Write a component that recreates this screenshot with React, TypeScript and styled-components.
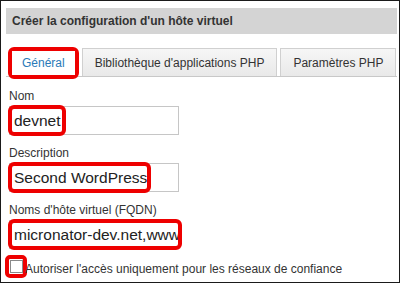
import styled, { createGlobalStyle } from 'styled-components';

const GlobalStyle = createGlobalStyle`
  html, body {
    margin: 0;
    padding: 0;
    background: #fff;
  }
  * {
    box-sizing: border-box;
  }
`;

const Frame = styled.div`
  width: 400px;
  height: 283px;
  overflow: hidden;
  border: 1px solid #1a1a1a;
  padding: 7px 2px 0 5px;
  background: #fff;
  font-family: "Liberation Sans", Arial, sans-serif;
  color: #333;
`;

const Header = styled.div`
  display: flex;
  align-items: center;
  height: 26px;
  padding: 0 6px;
  background: #d4d4d4;
  font-size: 12px;
  font-weight: bold;
  color: #333;
`;

const TabBar = styled.div`
  display: flex;
  align-items: flex-end;
  gap: 3px;
  margin-top: 13px;
  padding: 0 6px 0 2px;
  border-bottom: 1px solid #c8c8c8;
`;

const Tab = styled.div<{ active?: boolean }>`
  display: flex;
  align-items: center;
  flex-shrink: 0;
  white-space: nowrap;
  height: 28px;
  padding: 0 ${p => (p.active ? '10px' : '12px')};
  border: 1px solid #d0d0d0;
  border-bottom: none;
  background: ${p => (p.active ? '#fff' : 'linear-gradient(#f6f6f6, #e9e9e9)')};
  color: ${p => (p.active ? '#2a7ab8' : '#333')};
  font-size: 12px;
`;

const TabRing = styled.div`
  flex-shrink: 0;
  border: 4px solid #ee0000;
  border-radius: 6px;
  margin-bottom: -3px;
  position: relative;
  z-index: 1;
  background: #fff;
  & > div {
    border: none;
    height: 24px;
    padding: 0 10px;
  }
`;

const Form = styled.div`
  display: flex;
  flex-direction: column;
  padding: 12px 0 0 3px;
`;

const Field = styled.div`
  display: flex;
  flex-direction: column;
  margin-bottom: 11px;
`;

const Label = styled.label`
  font-size: 12px;
  color: #333;
  line-height: 14px;
  margin-bottom: 3px;
`;

const InputBox = styled.div<{ width: number }>`
  position: relative;
  width: ${p => p.width}px;
  height: 29px;
  border: 1px solid #c6c6c6;
  background: #fff;
  display: flex;
  align-items: center;
  padding-left: 4px;
  white-space: nowrap;
  font-size: 15.5px;
  color: #222;
`;

const Clip = styled.span`
  overflow: hidden;
  width: 100%;
`;

const Mark = styled.div<{ width: number }>`
  position: absolute;
  left: -2px;
  top: -2px;
  bottom: -2px;
  width: ${p => p.width}px;
  border: 4px solid #ee0000;
  border-radius: 6px;
`;

const CheckRow = styled.div`
  display: flex;
  align-items: center;
  margin-top: -5px;
  margin-left: -4px;
`;

const CheckRing = styled.div`
  width: 22px;
  height: 23px;
  display: flex;
  align-items: center;
  justify-content: center;
  border: 4px solid #ee0000;
  border-radius: 5px;
`;

const Box = styled.span`
  width: 13px;
  height: 13px;
  border: 1px solid #8a8a8a;
  background: #fff;
`;

const CheckLabel = styled.span`
  font-size: 12px;
  color: #333;
  margin: 4px 0 0 -2px;
`;

export default function App() {
  return (
    <>
      <GlobalStyle />
      <Frame>
        <Header>Créer la configuration d'un hôte virtuel</Header>
        <TabBar>
          <TabRing>
            <Tab active>Général</Tab>
          </TabRing>
          <Tab>Bibliothèque d'applications PHP</Tab>
          <Tab>Paramètres PHP</Tab>
        </TabBar>
        <Form>
          <Field>
            <Label>Nom</Label>
            <InputBox width={170}>
              <Clip>devnet</Clip>
              <Mark width={58} />
            </InputBox>
          </Field>
          <Field>
            <Label>Description</Label>
            <InputBox width={170}>
              <Clip>Second WordPress</Clip>
              <Mark width={143} />
            </InputBox>
          </Field>
          <Field>
            <Label>Noms d'hôte virtuel (FQDN)</Label>
            <InputBox width={170}>
              <Clip>micronator-dev.net,www</Clip>
              <Mark width={174} />
            </InputBox>
          </Field>
          <CheckRow>
            <CheckRing>
              <Box />
            </CheckRing>
            <CheckLabel>Autoriser l'accès uniquement pour les réseaux de confiance</CheckLabel>
          </CheckRow>
        </Form>
      </Frame>
    </>
  );
}
